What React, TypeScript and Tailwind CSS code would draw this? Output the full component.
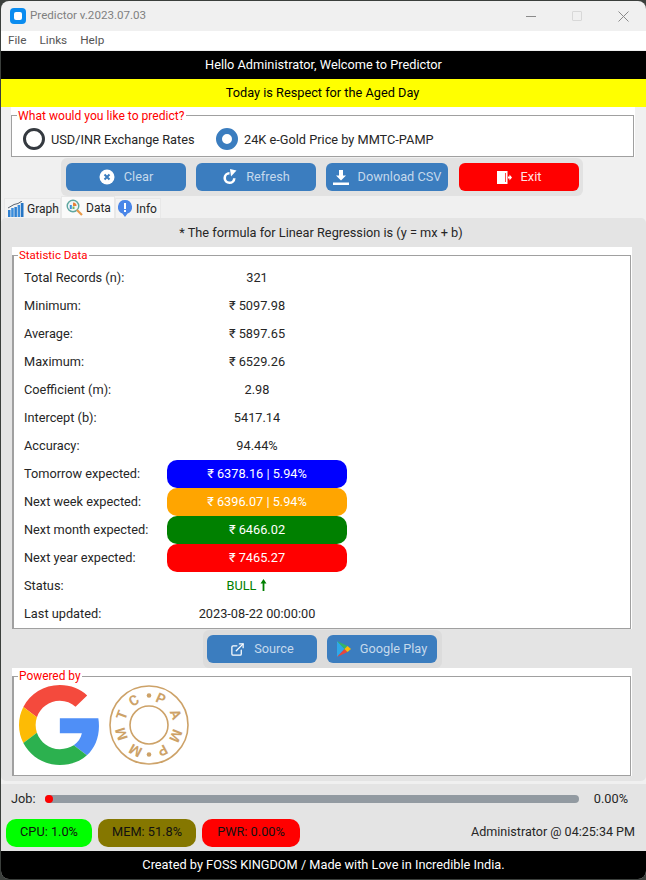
import React from 'react';
import { FiExternalLink } from 'react-icons/fi';

const ROWS: { label: string; value: React.ReactNode; pill?: string }[] = [
  { label: 'Total Records (n):', value: '321' },
  { label: 'Minimum:', value: '₹ 5097.98' },
  { label: 'Average:', value: '₹ 5897.65' },
  { label: 'Maximum:', value: '₹ 6529.26' },
  { label: 'Coefficient (m):', value: '2.98' },
  { label: 'Intercept (b):', value: '5417.14' },
  { label: 'Accuracy:', value: '94.44%' },
  { label: 'Tomorrow expected:', value: '₹ 6378.16 | 5.94%', pill: 'bg-[#0000ff] text-white' },
  { label: 'Next week expected:', value: '₹ 6396.07 | 5.94%', pill: 'bg-[#ffa500] text-white' },
  { label: 'Next month expected:', value: '₹ 6466.02', pill: 'bg-[#008000] text-white' },
  { label: 'Next year expected:', value: '₹ 7465.27', pill: 'bg-[#ff0000] text-white' },
  {
    label: 'Status:',
    value: (
      <span className="flex items-center justify-center gap-[4px] pr-[20px] text-[#008000]">
        BULL
        <svg width="7" height="12" viewBox="0 0 7 12" className="-mt-[2px]">
          <path d="M3.500 0 6.500 4.500H4.400V12H2.600V4.500H.5z" fill="#008000" />
        </svg>
      </span>
    ),
  },
  { label: 'Last updated:', value: '2023-08-22 00:00:00' },
];

const SEAL = [
  { ch: 'P', a: 24 },
  { ch: 'A', a: 68 },
  { ch: 'M', a: 112 },
  { ch: 'P', a: 152 },
  { ch: 'M', a: 208 },
  { ch: 'M', a: 252 },
  { ch: 'T', a: 290 },
  { ch: 'C', a: 328 },
];

function Btn({ w, icon, label, red }: { w: string; icon: React.ReactNode; label: string; red?: boolean }) {
  return (
    <div
      className={`${w} h-7 shrink-0 rounded-md flex items-center justify-center gap-[9px] ${
        red ? 'bg-[#ff0000] text-[#ffe4e4]' : 'bg-[#3b7dbf] text-[#c5d9ec]'
      }`}
    >
      {icon}
      <span>{label}</span>
    </div>
  );
}

function GraphIcon() {
  return (
    <svg width="16" height="16" viewBox="0 0 16 16">
      <rect x="0" y="9" width="2.500" height="7" fill="#2f80d0" />
      <rect x="3.200" y="7" width="2.500" height="9" fill="#3a8ddc" />
      <rect x="6.400" y="6" width="2.500" height="10" fill="#2f80d0" />
      <rect x="9.600" y="4" width="2.500" height="12" fill="#3a8ddc" />
      <rect x="12.800" y="2" width="2.700" height="14" fill="#2575c4" />
      <path d="M0 7 6 3.500 10 2.500 14 0" stroke="#5a6470" strokeWidth="1" fill="none" />
    </svg>
  );
}

function DataIcon() {
  return (
    <svg width="17" height="17" viewBox="0 0 17 17">
      <circle cx="7" cy="7" r="5.800" fill="#eef6f6" stroke="#5fa7a0" strokeWidth="1.400" />
      <rect x="3.800" y="6" width="2" height="4" fill="#3a8ddc" />
      <path d="M7 3.500a3.500 3.500 0 0 1 3.500 3.500H7z" fill="#e8803a" />
      <rect x="6.500" y="7.500" width="2" height="2.500" fill="#7bb661" />
      <path d="M11 11l5 5" stroke="#e89a4a" strokeWidth="2.200" />
    </svg>
  );
}

function InfoIcon() {
  return (
    <svg width="14" height="17" viewBox="0 0 14 17">
      <path d="M7 0a7 7 0 0 1 2.600 13.500L7 17l-2.600-3.500A7 7 0 0 1 7 0z" fill="#4a86e8" />
      <rect x="6" y="3" width="2" height="6" fill="#fff" />
      <rect x="6" y="10" width="2" height="2" fill="#fff" />
    </svg>
  );
}

function GoogleLogo() {
  return (
    <svg width="80" height="80" viewBox="0 0 47 48" preserveAspectRatio="none">
      <path fill="#f44a3d" d="M24 9.500c3.540 0 6.710 1.220 9.210 3.600l6.850-6.850C35.900 2.380 30.470 0 24 0 14.620 0 6.510 5.380 2.560 13.220l7.980 6.190C12.430 13.720 17.740 9.500 24 9.500z" />
      <path fill="#4f8ff7" d="M46.980 24.550c0-1.570-.15-3.090-.38-4.550H24v9.020h12.940c-.58 2.960-2.260 5.480-4.780 7.180l7.730 6c4.510-4.180 7.090-10.360 7.090-17.650z" />
      <path fill="#fdbb05" d="M10.530 28.590c-.48-1.450-.76-2.990-.76-4.590s.27-3.140.76-4.590l-7.980-6.190C.92 16.460 0 20.120 0 24c0 3.880.92 7.540 2.560 10.780l7.970-6.190z" />
      <path fill="#2cb14f" d="M24 48c6.480 0 11.930-2.130 15.890-5.810l-7.730-6c-2.150 1.450-4.920 2.300-8.160 2.300-6.260 0-11.570-4.220-13.470-9.910l-7.980 6.190C6.510 42.620 14.620 48 24 48z" />
    </svg>
  );
}

function PampSeal() {
  return (
    <svg width="80" height="80" viewBox="-40 -40 80 80">
      <circle r="39" fill="none" stroke="#cda268" strokeWidth="1.600" />
      <circle r="19" fill="none" stroke="#cda268" strokeWidth="1.600" />
      {SEAL.map((s, i) => (
        <text
          key={i}
          transform={`rotate(${s.a}) translate(0 -24)`}
          textAnchor="middle"
          fontSize="14"
          fontWeight="700"
          fill="#cda268"
          style={{ fontFamily: 'Roboto, sans-serif' }}
        >
          {s.ch}
        </text>
      ))}
      <circle cx="0" cy="-29.500" r="2.300" fill="#cda268" />
      <circle cx="0" cy="29.500" r="2.300" fill="#cda268" />
    </svg>
  );
}

export default function App() {
  return (
    <div className="w-[646px] h-[880px] bg-[#3b3f3c] overflow-hidden font-['Roboto',sans-serif] text-[12.75px] leading-none text-[#262626]">
      <div className="ml-px mt-px w-[645px] h-[878px] rounded-[8px] overflow-hidden bg-[#f0f0f0] flex flex-col">
        {/* title bar */}
        <div className="h-[30px] shrink-0 flex items-center pl-[9px] text-[#7f7f7f]">
          <div className="w-4 h-4 rounded-[4px] bg-[#0a8cf0] flex items-center justify-center mr-[4px]">
            <div className="w-2 h-2 rounded-[2px] bg-white" />
          </div>
          <span className="text-[11.6px]">Predictor v.2023.07.03</span>
          <div className="ml-auto flex items-center gap-[36px] pr-[17px]">
            <div className="w-[10px] h-px bg-[#8a8a8a]" />
            <div className="w-[10px] h-[10px] border border-[#d8d8d8] rounded-[1px]" />
            <svg width="11" height="11" viewBox="0 0 11 11">
              <path d="M.5.5l10 10M10.500.5l-10 10" stroke="#8a8a8a" strokeWidth="1" />
            </svg>
          </div>
        </div>
        {/* menu */}
        <div className="h-[19px] shrink-0 bg-white flex items-center pl-[7px] gap-[13px] text-[11.75px] text-[#555]">
          <span>File</span>
          <span>Links</span>
          <span>Help</span>
        </div>
        <div className="h-[28px] mt-px shrink-0 bg-black text-white flex items-center justify-center">
          Hello Administrator, Welcome to Predictor
        </div>
        <div className="h-[28px] shrink-0 bg-[#ffff00] text-black flex items-center justify-center pr-[2px]">
          Today is Respect for the Aged Day
        </div>

        {/* predict selector */}
        <div className="h-[50px] shrink-0 ml-[10px] w-[624px] bg-white pt-2">
          <div className="relative w-[623px] h-[42px] border border-[#a0a0a0] flex items-center pl-[11px] pt-[6px]">
            <span className="absolute left-[5px] -top-[6px] bg-white px-px text-[12.1px] text-[#ff0000]">What would you like to predict?</span>
            <div className="w-[22px] h-[22px] rounded-full border-[3.5px] border-[#353a40] mr-[6px]" />
            <span className="w-[165px] pt-[2px]">USD/INR Exchange Rates</span>
            <div className="w-[22px] h-[22px] rounded-full border-[6px] border-[#3b7dbf] mr-[6px]" />
            <span className="pt-[2px]">24K e-Gold Price by MMTC-PAMP</span>
          </div>
        </div>

        {/* action buttons */}
        <div className="h-[38px] mt-px shrink-0 ml-[60px] w-[522px] bg-[#e2e2e2] rounded-[6px] flex items-center gap-[10px] pl-[5px]">
          <Btn
            w="w-[120px]"
            label="Clear"
            icon={
              <svg width="16" height="16" viewBox="0 0 16 16">
                <circle cx="8" cy="8" r="7.500" fill="#fff" />
                <path d="M5.500 5.500l5 5M10.500 5.500l-5 5" stroke="#3b7dbf" strokeWidth="2" />
              </svg>
            }
          />
          <Btn
            w="w-[120px]"
            label="Refresh"
            icon={
              <svg width="15" height="16" viewBox="0 0 15 16">
                <path d="M7.500 4.200a4.800 4.800 0 1 0 4.800 5" fill="none" stroke="#fff" strokeWidth="2.600" />
                <path d="M8 0l6.500 1.500L9 7.500z" fill="#fff" />
              </svg>
            }
          />
          <Btn
            w="w-[122px]"
            label="Download CSV"
            icon={
              <svg width="16" height="15" viewBox="0 0 16 15">
                <path d="M6 0h4v5.500h3L8 10.500 3 5.500h3zM0 12.500h16V15H0z" fill="#fff" />
              </svg>
            }
          />
          <div className="ml-px">
            <Btn
              w="w-[120px]"
              red
              label="Exit"
              icon={
                <svg width="15" height="15" viewBox="0 0 15 15">
                  <path d="M0 1h10.500v13H0z" fill="#fff" />
                  <path d="M8.500 3 8.500 12" stroke="#ff0000" strokeWidth=".7" />
                  <path d="M11 6.500h1.500V4.500L15 7.500l-2.500 3V8.500H11z" fill="#fff" />
                </svg>
              }
            />
          </div>
        </div>

        {/* tabs */}
        <div className="h-[22px] shrink-0 flex items-end pl-[3px] text-[12px]">
          <div className="w-[57px] h-[20px] bg-[#f3f3f3] border border-[#e8e8e8] border-b-0 flex items-center pl-[3px] gap-[3px]">
            <GraphIcon />
            <span className="pt-px">Graph</span>
          </div>
          <div className="w-[54px] h-[22px] bg-[#fafafa] border border-[#e8e8e8] border-b-0 flex items-center pl-[4px] gap-[3px]">
            <DataIcon />
            <span>Data</span>
          </div>
          <div className="w-[46px] h-[20px] bg-[#f3f3f3] border border-[#e8e8e8] border-b-0 flex items-center pl-[2px] gap-[4px]">
            <InfoIcon />
            <span className="pt-px">Info</span>
          </div>
        </div>

        {/* data tab */}
        <div className="h-[563px] shrink-0 bg-[#e4e4e4] rounded-[5px] flex flex-col">
          <div className="h-[29px] shrink-0 flex items-center justify-center pt-[2px] pr-[5px]">* The formula for Linear Regression is (y = mx + b)</div>

          <div className="h-[382px] shrink-0 ml-[11px] w-[620px] bg-white pt-2">
            <div className="relative w-[619px] h-[374px] border border-[#a0a0a0] border-l-2 pl-[10px]">
              <span className="absolute left-[4px] -top-[6px] bg-white px-px text-[11.5px] text-[#ff0000]">Statistic Data</span>
              <div className="pt-2">
                {ROWS.map((r) => (
                  <div key={r.label} className="h-7 flex items-center">
                    <span className="w-[143px]">{r.label}</span>
                    <div className={`w-[180px] h-7 flex items-center justify-center rounded-[10px] ${r.pill ?? ''}`}>
                      {r.value}
                    </div>
                  </div>
                ))}
              </div>
            </div>
          </div>

          <div className="h-[38px] mt-px shrink-0 ml-[202px] w-[239px] bg-[#dcdcdc] rounded-[6px] flex items-center gap-[10px] px-1">
            <Btn w="w-[110px]" label="Source" icon={<FiExternalLink className="text-white text-[15px]" />} />
            <Btn
              w="w-[110px]"
              label="Google Play"
              icon={
                <svg width="14" height="16" viewBox="0 0 14 16">
                  <path d="M0 0v16l7.500-8z" fill="#2fa8e8" />
                  <path d="M0 0l7.500 8 3-3z" fill="#35b56a" />
                  <path d="M0 16l7.500-8 3 3z" fill="#e8453c" />
                  <path d="M10.500 5 14 8l-3.500 3-3-3z" fill="#fbbc05" />
                </svg>
              }
            />
          </div>

          <div className="h-[108px] shrink-0 ml-[11px] w-[620px] bg-white pt-2">
            <div className="relative w-[619px] h-[100px] border border-[#a0a0a0] border-l-2 flex items-start pl-[5px] pt-2 gap-[10px]">
              <span className="absolute left-[4px] -top-[6px] bg-white px-px text-[11.9px] text-[#ff0000]">Powered by</span>
              <GoogleLogo />
              <PampSeal />
            </div>
          </div>
        </div>

        {/* job progress */}
        <div className="h-[30px] mt-[3px] shrink-0 bg-[#e4e4e4] flex items-center pl-[10px] pr-[18px] pb-px">
          <span className="w-[34px] pt-[2px]">Job:</span>
          <div className="relative w-[534px] h-2 rounded-full bg-[#929aa1]">
            <div className="absolute left-0 top-0 w-2 h-2 rounded-full bg-[#ff0000]" />
          </div>
          <span className="ml-auto pt-[2px]">0.00%</span>
        </div>

        {/* system stats */}
        <div className="h-[37px] shrink-0 bg-[#e4e4e4] flex items-center pl-[5px] pr-[11px] gap-[6px] text-[#111]">
          <div className="w-[86px] h-7 rounded-[10px] bg-[#00ff00] flex items-center justify-center">CPU: 1.0%</div>
          <div className="w-[98px] h-7 rounded-[10px] bg-[#857700] flex items-center justify-center">MEM: 51.8%</div>
          <div className="w-[98px] h-7 rounded-[10px] bg-[#ff0000] flex items-center justify-center">PWR: 0.00%</div>
          <span className="ml-auto text-[12.55px] text-[#262626]">Administrator @ 04:25:34 PM</span>
        </div>

        <div className="flex-1 bg-black text-white flex items-center justify-center">
          Created by FOSS KINGDOM / Made with Love in Incredible India.
        </div>
      </div>
    </div>
  );
}
